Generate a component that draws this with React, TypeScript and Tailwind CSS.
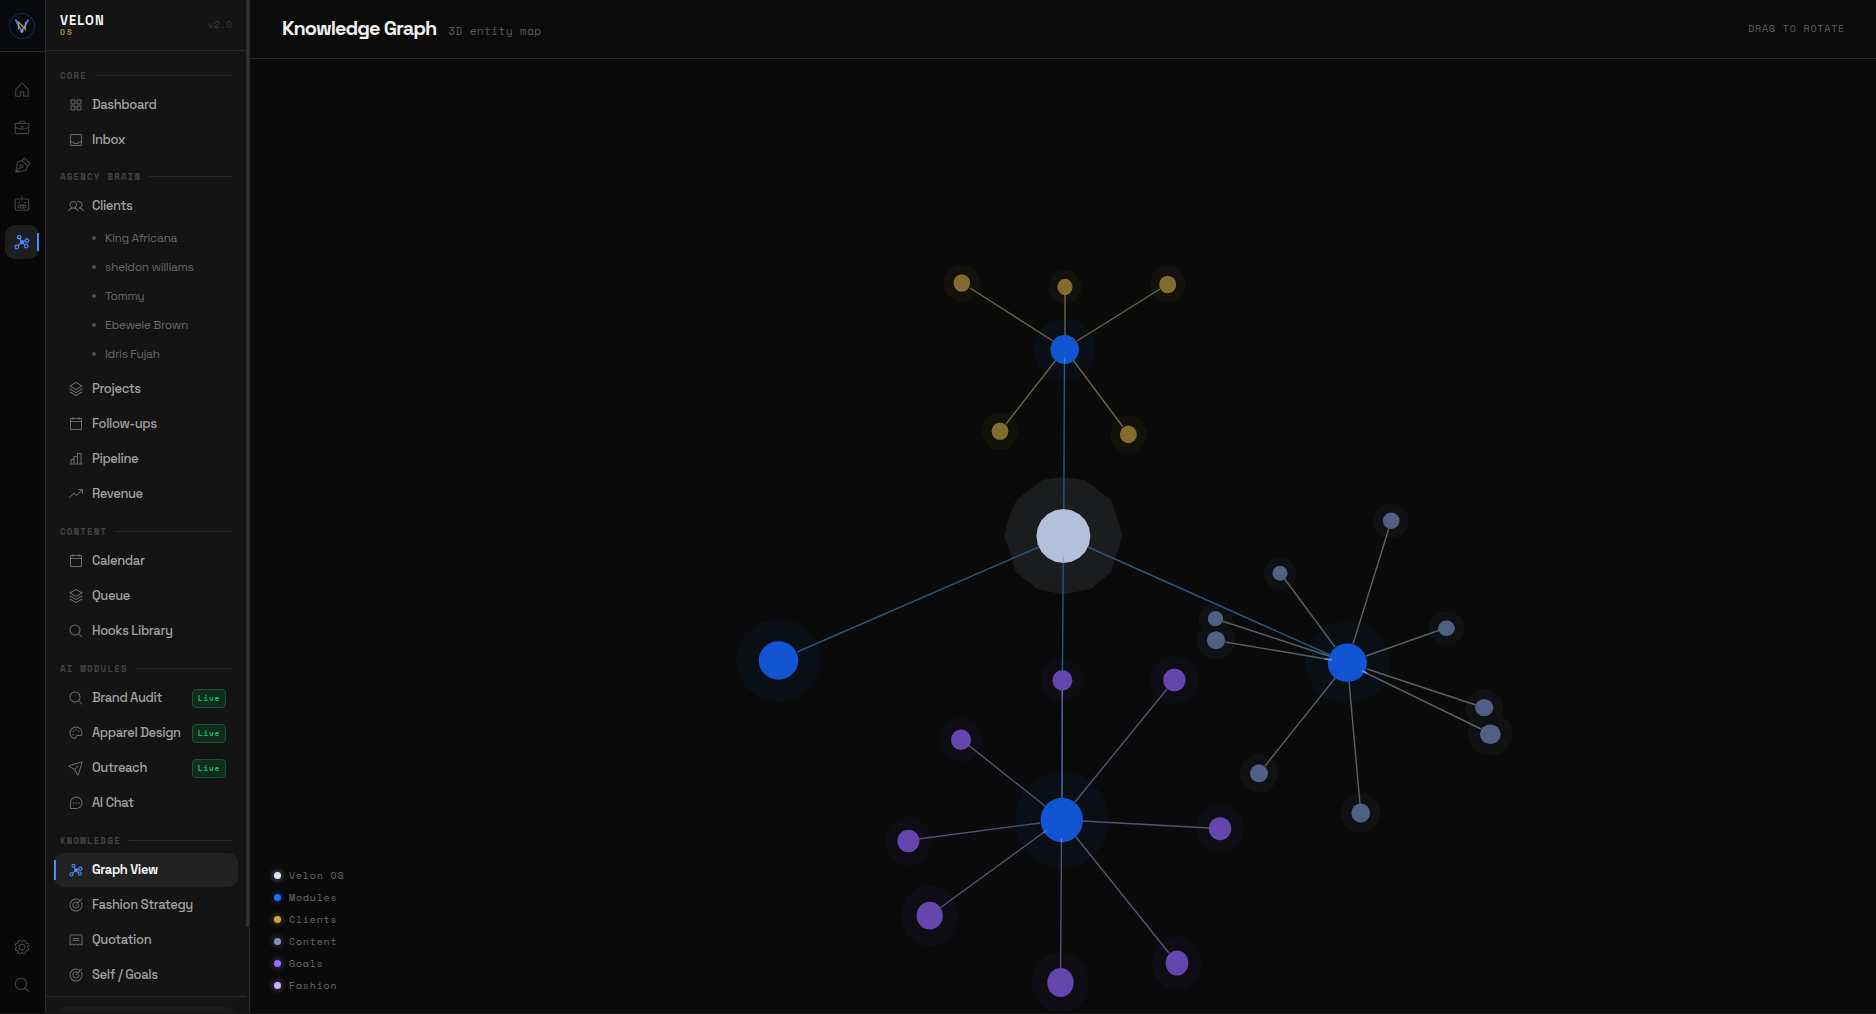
import type { ComponentType } from "react";
import {
  PiHouse, PiBriefcase, PiPenNib, PiRobot, PiGear, PiMagnifyingGlass, PiSquaresFour, PiTray,
  PiUsers, PiStack, PiCalendarBlank, PiChartBar, PiTrendUp, PiPalette, PiPaperPlaneTilt,
  PiChatTeardropDots, PiTarget, PiReceipt,
} from "react-icons/pi";

const SANS = "font-['Space_Grotesk',Inter,sans-serif]";
const MONO = "font-['Space_Mono','Liberation_Mono',monospace]";

type IconType = ComponentType<{ size?: number; className?: string }>;

function GraphIcon({ size = 16, className }: { size?: number; className?: string }) {
  return (
    <svg viewBox="0 0 18 18" width={size} height={size} className={className} fill="none" stroke="currentColor" strokeWidth="1.2" aria-hidden="true">
      <path d="M9 9 6.9 5.9M9 9l3-.9M9 9l2.9 2.9M9 9l-4 3.8" />
      <circle cx="9" cy="9.2" r="1.5" fill="currentColor" />
      <circle cx="6.2" cy="4.2" r="1.7" />
      <circle cx="13.9" cy="7.6" r="1.8" />
      <circle cx="13.2" cy="13" r="1.8" />
      <circle cx="3.8" cy="14" r="1.8" />
    </svg>
  );
}

type Item = { label: string; icon: IconType; live?: boolean; active?: boolean; children?: string[] };
const sections: { title: string; items: Item[] }[] = [
  { title: "CORE", items: [
    { label: "Dashboard", icon: PiSquaresFour },
    { label: "Inbox", icon: PiTray },
  ] },
  { title: "AGENCY BRAIN", items: [
    { label: "Clients", icon: PiUsers, children: ["King Africana", "sheldon williams", "Tommy", "Ebewele Brown", "Idris Fujah"] },
    { label: "Projects", icon: PiStack },
    { label: "Follow-ups", icon: PiCalendarBlank },
    { label: "Pipeline", icon: PiChartBar },
    { label: "Revenue", icon: PiTrendUp },
  ] },
  { title: "CONTENT", items: [
    { label: "Calendar", icon: PiCalendarBlank },
    { label: "Queue", icon: PiStack },
    { label: "Hooks Library", icon: PiMagnifyingGlass },
  ] },
  { title: "AI MODULES", items: [
    { label: "Brand Audit", icon: PiMagnifyingGlass, live: true },
    { label: "Apparel Design", icon: PiPalette, live: true },
    { label: "Outreach", icon: PiPaperPlaneTilt, live: true },
    { label: "AI Chat", icon: PiChatTeardropDots },
  ] },
  { title: "KNOWLEDGE", items: [
    { label: "Graph View", icon: GraphIcon, active: true },
    { label: "Fashion Strategy", icon: PiTarget },
    { label: "Quotation", icon: PiReceipt },
    { label: "Self / Goals", icon: PiTarget },
  ] },
];

const rail: { label: string; icon: IconType; active?: boolean }[] = [
  { label: "Home", icon: PiHouse },
  { label: "Agency", icon: PiBriefcase },
  { label: "Content", icon: PiPenNib },
  { label: "AI modules", icon: PiRobot },
  { label: "Knowledge", icon: GraphIcon, active: true },
];

function RailButton({ label, icon: Icon, active }: { label: string; icon: IconType; active?: boolean }) {
  return (
    <button
      aria-label={label}
      className={active
        ? "relative flex size-[34px] items-center justify-center rounded-[10px] bg-[#1e1e1e] text-[#4a8cff]"
        : "relative flex size-[34px] items-center justify-center rounded-[10px] text-[#444444]"}
    >
      <Icon size={18} />
      {active && <span className="absolute right-0 top-2 h-[18px] w-[2px] bg-[#4a8cff]" />}
    </button>
  );
}

function Rail() {
  return (
    <nav aria-label="Workspaces" className="flex w-[46px] shrink-0 flex-col border-r border-[#292929] bg-[#080808] pb-[11px]">
      <div className="flex h-[52px] shrink-0 items-center border-b border-[#292929] bg-[#080a0e] pl-[9px]">
        <svg viewBox="0 0 26 26" className="size-[26px]" fill="none" aria-hidden="true">
          <circle cx="13" cy="13" r="12.5" fill="#05080f" stroke="#1b2b45" />
          <path d="M6.5 6.5 L12.7 18.5 L19.5 6.5" stroke="#3f7ff0" strokeWidth="1.8" />
          <path d="M9.5 16.5 V9 L16.5 16.5 V9" stroke="#b8963c" strokeWidth="1.2" />
          <circle cx="13" cy="18.5" r="1.2" fill="#e0b040" />
        </svg>
      </div>
      <div className="flex flex-1 flex-col gap-1 pl-[5px] pt-[21px]">
        {rail.map((r) => <RailButton key={r.label} {...r} />)}
      </div>
      <div className="flex flex-col gap-1 pl-[5px]">
        <RailButton label="Settings" icon={PiGear} />
        <RailButton label="Search" icon={PiMagnifyingGlass} />
      </div>
    </nav>
  );
}

function NavItem({ item }: { item: Item }) {
  const Icon = item.icon;
  return (
    <li>
      <a
        href="#"
        aria-current={item.active ? "page" : undefined}
        className={item.active
          ? "relative flex h-[34px] items-center gap-2 rounded-[10px] bg-[#222222] pl-[14px] pr-3 text-[13px] font-bold tracking-[-0.03em] text-[#f0f0f0]"
          : "relative flex h-[34px] items-center gap-2 rounded-[10px] pl-[14px] pr-3 text-[13px] font-medium tracking-[-0.03em] text-[#a0a0a0]"}
      >
        {item.active && <span className="absolute left-0 top-[7px] h-5 w-[2px] bg-[#4a8cff]" />}
        <Icon size={16} className={item.active ? "shrink-0 text-[#4a8cff]" : "shrink-0 text-[#6a6a6a]"} />
        <span className="min-w-0 flex-1 whitespace-nowrap">{item.label}</span>
        {item.live && (
          <span className={`${MONO} flex h-[19px] shrink-0 items-center rounded-[4px] border border-[#0f5a33] bg-[#132a1e] px-[5px] text-[8px] font-bold tracking-[0.08em] text-[#05c168]`}>
            Live
          </span>
        )}
      </a>
      {item.children && (
        <ul className="mb-[3px] mt-px flex flex-col gap-px">
          {item.children.map((c) => (
            <li key={c}>
              <a href="#" className="flex h-7 items-center gap-[9px] pl-[38px] text-[12px] tracking-[-0.03em] text-[#666666]">
                <span className="size-1 rounded-full bg-[#505050]" />
                {c}
              </a>
            </li>
          ))}
        </ul>
      )}
    </li>
  );
}

function Sidebar() {
  return (
    <aside className="relative flex w-[204px] shrink-0 flex-col overflow-hidden border-r border-[#2a2a2a] bg-[#141414]">
      <div className="mr-[3px] flex h-[51px] shrink-0 items-center justify-between border-b border-[#2a2a2a] px-[14px]">
        <div className="pb-px">
          <div className="text-[13px] font-bold leading-[14px] tracking-[0.08em] text-[#f2f2f2]">VELON</div>
          <div className={`${MONO} text-[8px] font-bold leading-[8px] tracking-[0.25em] text-[#a88a3a]`}>OS</div>
        </div>
        <span className={`${MONO} pb-0.5 text-[10px] text-[#3a3a3a]`}>v2.0</span>
      </div>
      <nav aria-label="Main" className="mr-[3px] shrink-0 px-2 pb-1 pt-[5px]">
        {sections.map((s, i) => (
          <section key={s.title} className={i > 1 ? "pt-px" : ""}>
            <h2 className={`${MONO} mb-[5px] flex h-[27px] items-end gap-2 px-[6px] text-[9px] font-bold leading-[14px] tracking-[0.14em] text-[#444444]`}>
              {s.title}
              <span className="mb-[7px] h-px flex-1 bg-[#2a2a2a]" />
            </h2>
            <ul className="flex flex-col gap-px">
              {s.items.map((item) => <NavItem key={item.label} item={item} />)}
            </ul>
          </section>
        ))}
      </nav>
      <div className="mr-[3px] shrink-0 border-t border-[#2a2a2a] px-[10px] py-[10px]">
        <div className="h-12 rounded-[10px] bg-[#1b1b1b]" />
      </div>
      <span className="absolute right-0 top-0 h-[91.5%] w-[3px] rounded-b-full bg-[#303030]" />
    </aside>
  );
}

type Kind = "core" | "module" | "client" | "content" | "goal";
const fills: Record<Kind, [string, string]> = {
  core: ["#b6bfda", "#1b1c1d"],
  module: ["#1155d2", "#0a0f16"],
  client: ["#826c30", "#12110c"],
  content: ["#4f6083", "#101112"],
  goal: ["#6545ae", "#0f0d14"],
};

// [x, y, rx, ry, halo radius x, halo radius y, kind]
const nodes: [number, number, number, number, number, number, Kind][] = [
  [1064.7, 349.5, 14.2, 14.5, 31, 31.5, "module"],
  [778.5, 660.5, 19.8, 19.2, 43, 42, "module"],
  [1347.3, 662.8, 19.6, 19.2, 43, 42, "module"],
  [1061.8, 820, 21.2, 22.3, 47.5, 49, "module"],
  [961.8, 283, 8.3, 8.8, 18.3, 19, "client"],
  [1065, 287, 7.5, 8.2, 16.7, 17.3, "client"],
  [1167.7, 284.5, 8.5, 8.8, 18.3, 19, "client"],
  [1000, 431.3, 8.4, 8.8, 18.3, 19, "client"],
  [1128.4, 434.4, 8.5, 8.8, 18.3, 19, "client"],
  [1391.2, 520.8, 8.4, 8.2, 18, 17.3, "content"],
  [1280, 573.3, 7.5, 7.5, 16.3, 16, "content"],
  [1215.5, 618.7, 7.6, 7.6, 17, 16, "content"],
  [1216, 640.2, 9, 9, 19.3, 19.3, "content"],
  [1446.5, 628.2, 8.4, 7.8, 18, 17, "content"],
  [1484.2, 707.7, 9.1, 8.6, 19.3, 18.5, "content"],
  [1490.3, 734.3, 10.4, 9.8, 22.8, 21, "content"],
  [1259, 773.3, 9, 9, 19.3, 19.5, "content"],
  [1360.7, 813, 9.4, 9.6, 20, 20, "content"],
  [1062.4, 680.3, 10, 10.2, 22, 22, "goal"],
  [1174.4, 680, 11.2, 11.2, 24.4, 24.4, "goal"],
  [961, 739.8, 10, 10.3, 22.3, 22.5, "goal"],
  [908.4, 841, 11, 11.3, 23.6, 24.8, "goal"],
  [1220, 828.7, 11.2, 11.5, 24, 25, "goal"],
  [929.7, 915.7, 13.1, 13.9, 28.5, 31, "goal"],
  [1060.5, 982.5, 13.2, 14.5, 29, 31, "goal"],
  [1177, 963, 11.4, 12.6, 25.2, 27.3, "goal"],
];

// [x1, y1, x2, y2, colour]
const edges: [number, number, number, number, string][] = [
  [1064.5, 358, 1063.8, 510, "#2a557c"],
  [1039, 547, 797, 652, "#2a557c"],
  [1088, 547, 1330, 655, "#2a557c"],
  [1063.2, 562, 1062.5, 670, "#2a557c"],
  [970, 288, 1053, 341, "#6d634a"],
  [1065, 292, 1065, 336, "#6d634a"],
  [1160, 289, 1077, 341, "#6d634a"],
  [1056, 360, 1006, 424, "#6d634a"],
  [1073, 360, 1123, 427, "#6d634a"],
  [1389, 528, 1353, 644, "#5c5e66"],
  [1284, 578, 1335, 647, "#5c5e66"],
  [1222, 621, 1329, 656, "#5c5e66"],
  [1225, 642, 1332, 660, "#5c5e66"],
  [1440, 630, 1366, 656, "#5c5e66"],
  [1476, 705, 1367, 669, "#5c5e66"],
  [1481, 729, 1362, 671, "#5c5e66"],
  [1265, 766, 1336, 677, "#5c5e66"],
  [1360, 804, 1349, 681, "#5c5e66"],
  [1062.3, 690, 1062, 798, "#5b6aa6"],
  [1167, 689, 1075, 802, "#5e4e74"],
  [967, 744, 1045, 806, "#5e4e74"],
  [918, 839, 1040, 823, "#5e4e74"],
  [1209, 828, 1083, 821, "#5e4e74"],
  [940, 908, 1047, 830, "#5e4e74"],
  [1061.5, 838, 1060.6, 968, "#5e4e74"],
  [1169, 953, 1076, 837, "#5e4e74"],
];

// Short stretches where an edge passes in front of the node it joins.
const overlaps: [number, number, number, number, string][] = [
  [1063.4, 557, 1063.3, 563, "#86abe0"],
  [1064.6, 358, 1064.5, 364, "#3f7fe0"],
  [1061.5, 838, 1061.4, 842, "#6a78d8"],
  [1325, 659, 1332, 660, "#6f94dd"],
  [1362, 671, 1367, 673, "#6f94dd"],
  [1043, 833, 1047, 830, "#6a78d8"],
];

function ngon(cx: number, cy: number, rx: number, ry: number, n: number) {
  return Array.from({ length: n }, (_, i) => {
    const a = (i / n) * Math.PI * 2 - Math.PI / 2;
    return `${(cx + rx * Math.cos(a)).toFixed(1)},${(cy + ry * Math.sin(a)).toFixed(1)}`;
  }).join(" ");
}

function Graph() {
  return (
    <svg viewBox="250 59 1626 954" preserveAspectRatio="xMidYMid meet" className="absolute inset-0 size-full" role="img" aria-label="Entity graph">
      <polygon
        points="1063,477 1085,480 1111,500 1118,520 1122.5,536 1111,572 1091,589 1063,594.5 1037,589 1016,572 1004.5,536 1008,520 1016.5,500 1042,480"
        fill={fills.core[1]}
      />
      {nodes.map(([x, y, , , hx, hy, k], i) => (
        <polygon key={i} points={ngon(x, y, hx, hy, 14)} fill={fills[k][1]} />
      ))}
      {edges.map(([x1, y1, x2, y2, c], i) => (
        <line key={i} x1={x1} y1={y1} x2={x2} y2={y2} stroke={c} strokeWidth="1.4" />
      ))}
      <polygon points={ngon(1063.4, 536, 27, 27, 20)} fill={fills.core[0]} />
      {nodes.map(([x, y, rx, ry, , , k], i) => (
        <ellipse key={i} cx={x} cy={y} rx={rx} ry={ry} fill={fills[k][0]} />
      ))}
      {overlaps.map(([x1, y1, x2, y2, c], i) => (
        <line key={i} x1={x1} y1={y1} x2={x2} y2={y2} stroke={c} strokeWidth="1.4" />
      ))}
    </svg>
  );
}

const legend = [
  { label: "Velon OS", dot: "size-[7px] rounded-full bg-[#d8e4fa] shadow-[0_0_6px_#d8e4fa99]" },
  { label: "Modules", dot: "size-[7px] rounded-full bg-[#1a6fff] shadow-[0_0_6px_#1a6fff99]" },
  { label: "Clients", dot: "size-[7px] rounded-full bg-[#c9a544] shadow-[0_0_6px_#c9a54499]" },
  { label: "Content", dot: "size-[7px] rounded-full bg-[#7b90bb] shadow-[0_0_6px_#7b90bb99]" },
  { label: "Goals", dot: "size-[7px] rounded-full bg-[#9b6dff] shadow-[0_0_6px_#9b6dff99]" },
  { label: "Fashion", dot: "size-[7px] rounded-full bg-[#ccb2f8] shadow-[0_0_6px_#ccb2f899]" },
];

export default function App() {
  return (
    <div className={`${SANS} flex h-screen overflow-hidden border-b border-[#1a1516] bg-[#0a0a0a] text-white`}>
      <Rail />
      <Sidebar />
      <main className="flex min-w-0 flex-1 flex-col">
        <header className="flex h-[59px] shrink-0 items-center justify-between border-b border-[#2a2a2a] bg-[#0b0b0b] pb-0.5 pl-8 pr-[31px]">
          <div className="flex items-baseline gap-3">
            <h1 className="text-[20px] font-bold tracking-tighter text-[#f0f0f0]">Knowledge Graph</h1>
            <span className={`${MONO} text-[11px] tracking-[0.04em] text-[#5a5a5a]`}>3D entity map</span>
          </div>
          <span className={`${MONO} text-[10px] tracking-[0.08em] text-[#606060]`}>DRAG TO ROTATE</span>
        </header>
        <div className="relative min-h-0 flex-1">
          <Graph />
          <ul className="absolute bottom-[21px] left-6 flex flex-col gap-2">
            {legend.map((l) => (
              <li key={l.label} className={`${MONO} flex h-[14px] items-center gap-2 text-[10px] tracking-[0.08em] text-[#6a6a6a]`}>
                <span className={l.dot} />
                {l.label}
              </li>
            ))}
          </ul>
        </div>
      </main>
    </div>
  );
}
